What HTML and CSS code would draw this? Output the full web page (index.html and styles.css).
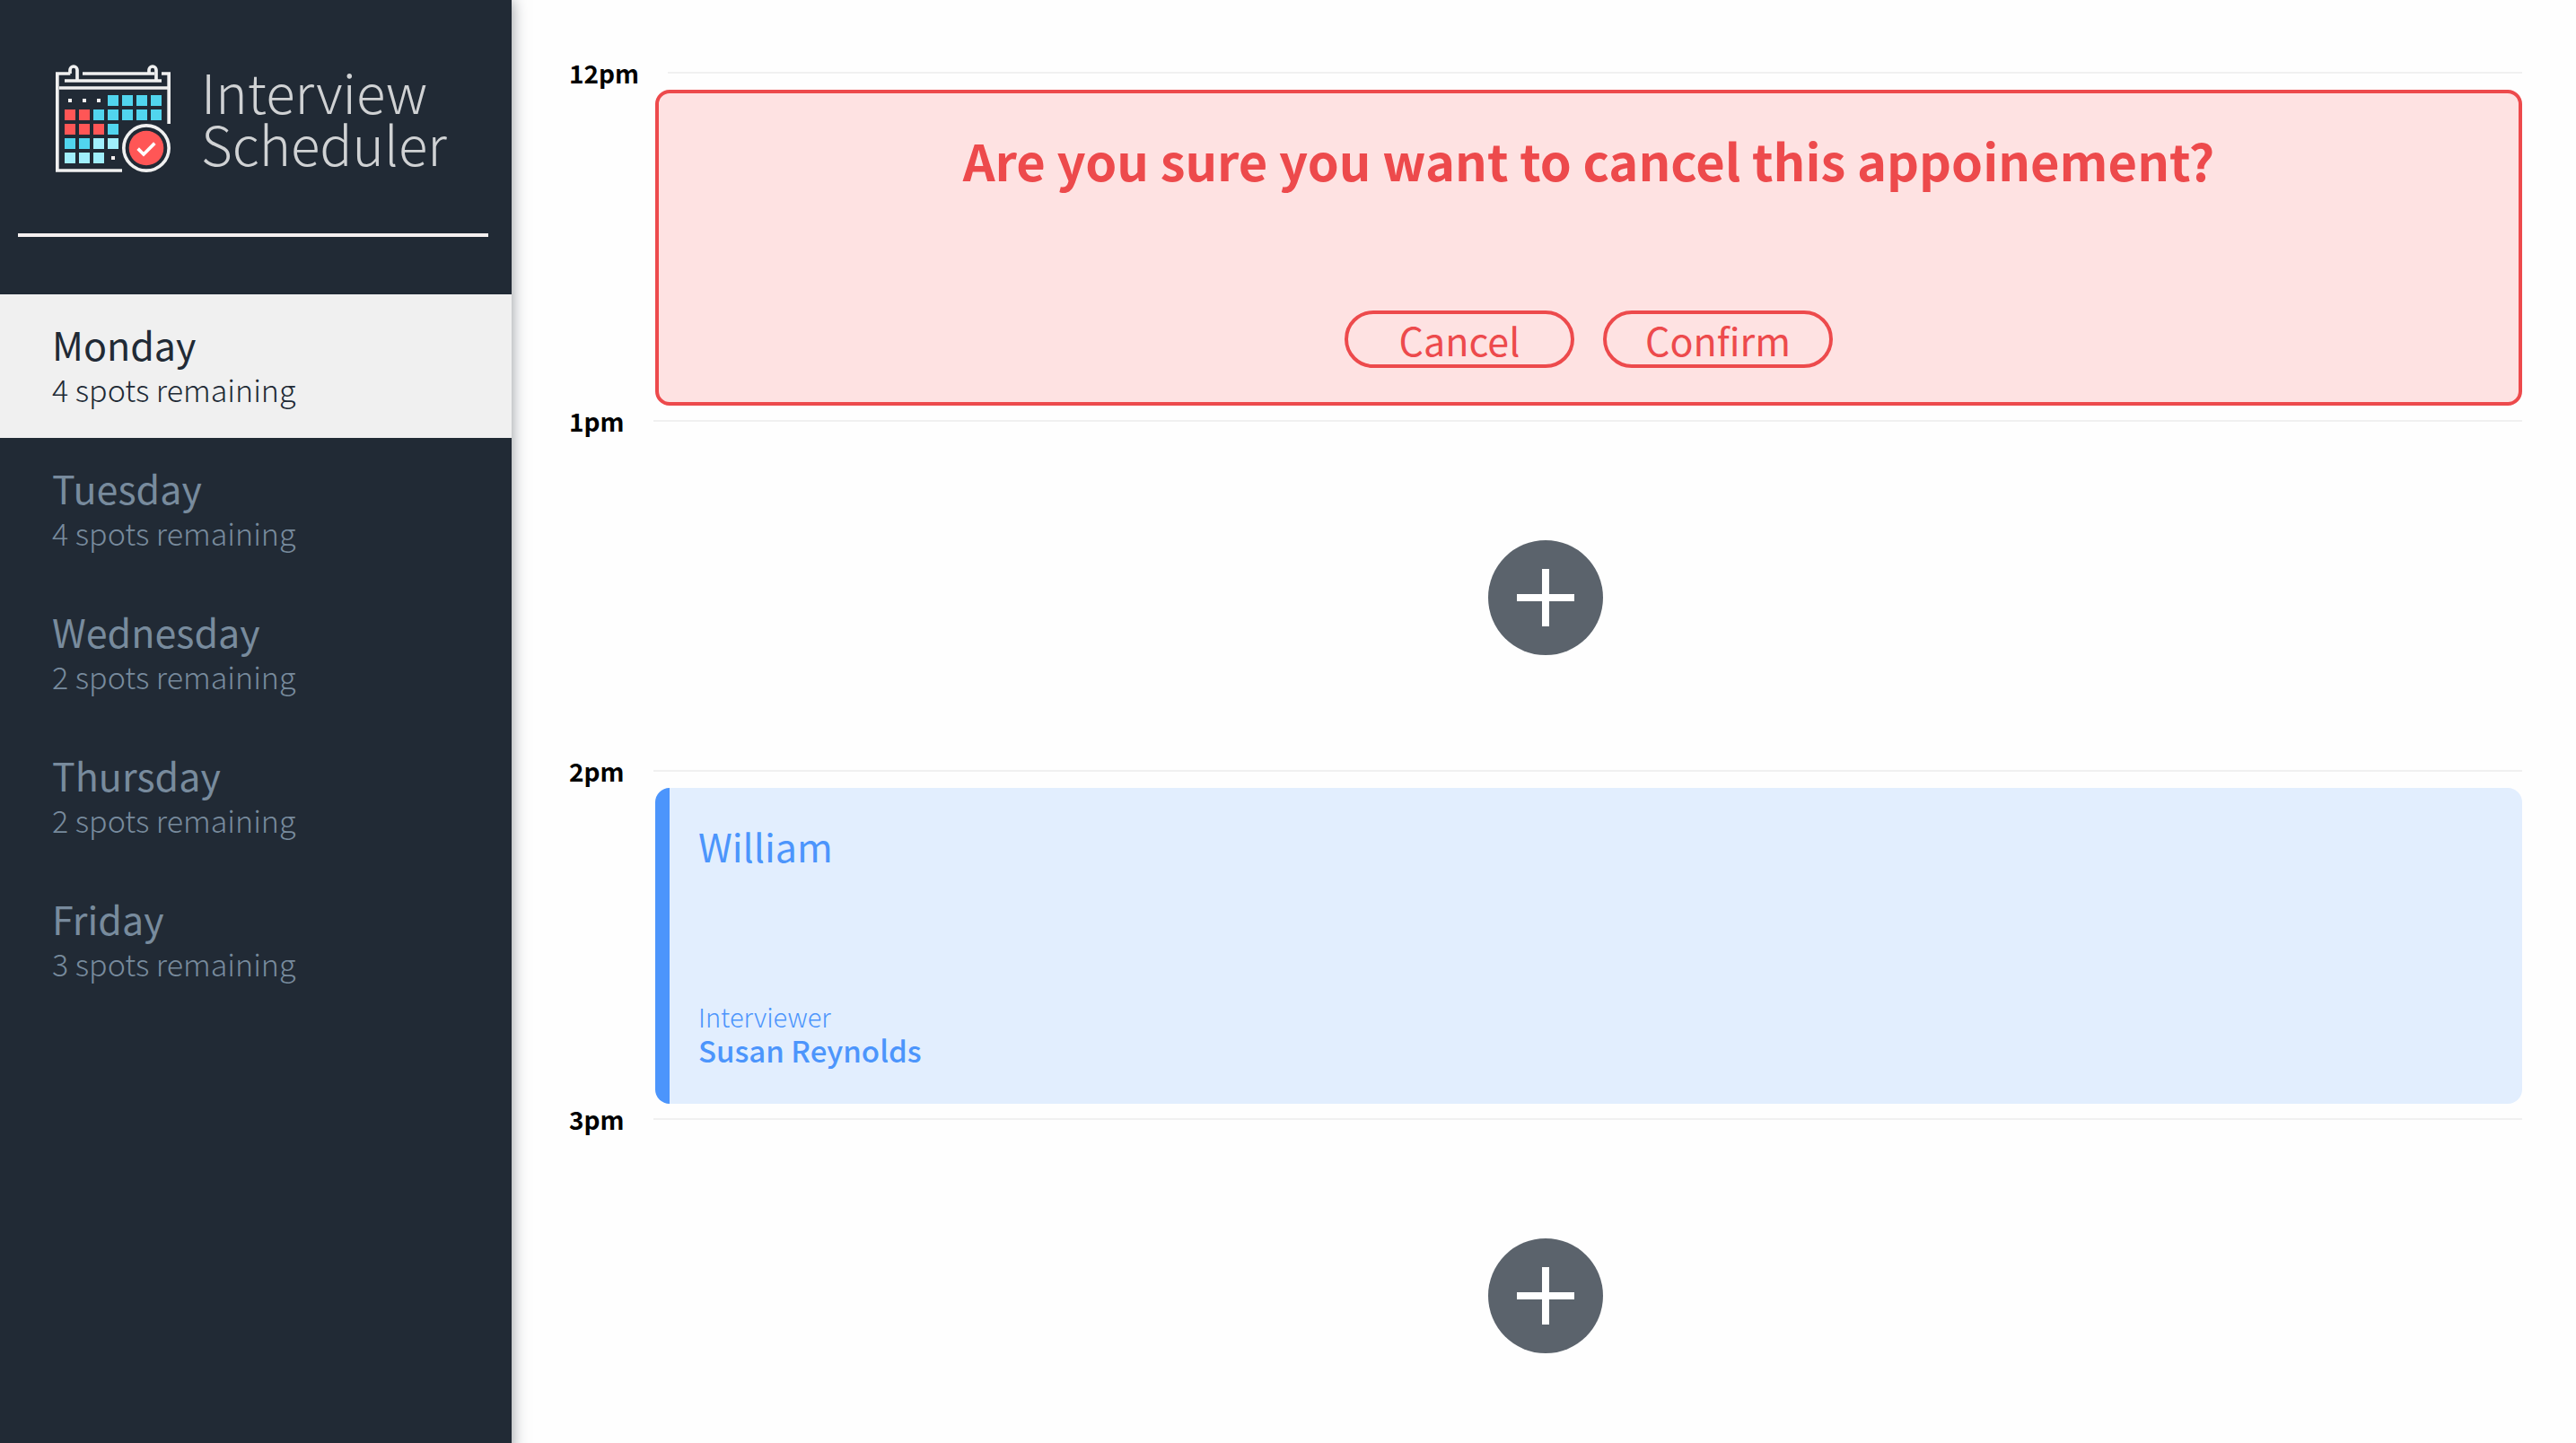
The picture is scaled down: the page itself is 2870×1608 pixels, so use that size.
FILE: index.html
```html
<!DOCTYPE html>
<html lang="en">
<head>
<meta charset="utf-8">
<title>Interview Scheduler</title>
<link rel="stylesheet" href="styles.css">
</head>
<body>
<div class="layout">
  <aside class="sidebar">
    <div class="brand">
      <svg class="brand-icon" viewBox="66 66 384 360" aria-hidden="true">
        <g fill="none" stroke="#f0f0f0" stroke-width="11">
          <path d="M115 96H71.500V420H288M78 144H444M96 120H420M156 96H396M420 96H444.500V264"/>
          <path d="M114 96V84A12 12 0 0 1 138 84V117M378 96V84A12 12 0 0 1 402 84V117"/>
          <circle cx="369" cy="345" r="75.500"/>
        </g>
        <g fill="#f5f0f0">
          <path d="M108 180h12v12h-12zM156 180h12v12h-12zM204 180h12v12h-12zM252 372h12v12h-12z"/>
        </g>
        <path fill="#51d5ee" d="M240 168h36v36h-36zM288 168h36v36h-36zM336 168h36v36h-36zM384 168h36v36h-36zM192 216h36v36h-36zM240 216h36v36h-36zM288 216h36v36h-36zM336 216h36v36h-36zM384 216h36v36h-36zM240 264h36v36h-36zM96 312h36v36h-36zM144 312h36v36h-36z"/>
        <path fill="#ff5656" d="M96 216h36v36h-36zM144 216h36v36h-36zM96 264h36v36h-36zM144 264h36v36h-36zM192 264h36v36h-36z"/>
        <path fill="#a0effc" d="M192 312h36v36h-36zM240 312h36v36h-36zM96 360h36v36h-36zM144 360h36v36h-36zM192 360h36v36h-36z"/>
        <circle cx="369" cy="345" r="58" fill="#ff5656"/>
        <path d="M341 347L360 366L397 329" fill="none" stroke="#fff" stroke-width="11"/>
      </svg>
      <h1 class="brand-name">Interview<br>Scheduler</h1>
    </div>
    <hr class="divider">
    <nav class="days">
      <a class="day day-selected" href="#monday"><span class="day-name">Monday</span><span class="day-spots">4 spots remaining</span></a>
      <a class="day" href="#tuesday"><span class="day-name">Tuesday</span><span class="day-spots">4 spots remaining</span></a>
      <a class="day" href="#wednesday"><span class="day-name">Wednesday</span><span class="day-spots">2 spots remaining</span></a>
      <a class="day" href="#thursday"><span class="day-name">Thursday</span><span class="day-spots">2 spots remaining</span></a>
      <a class="day" href="#friday"><span class="day-name">Friday</span><span class="day-spots">3 spots remaining</span></a>
    </nav>
  </aside>
  <main class="schedule">
    <section class="slot">
      <header class="slot-header"><h4 class="slot-time">12pm</h4><hr class="slot-line"></header>
      <div class="card card-confirm">
        <h2 class="confirm-text">Are you sure you want to cancel this appoinement?</h2>
        <div class="confirm-actions">
          <button class="button" type="button">Cancel</button>
          <button class="button" type="button">Confirm</button>
        </div>
      </div>
    </section>
    <section class="slot">
      <header class="slot-header"><h4 class="slot-time">1pm</h4><hr class="slot-line"></header>
      <div class="empty">
        <button class="add" type="button" aria-label="Add appointment"><svg class="add-icon" viewBox="0 0 128 128"><path d="M64 32V96M32 64H96" stroke="#fff" stroke-width="8"/></svg></button>
      </div>
    </section>
    <section class="slot">
      <header class="slot-header"><h4 class="slot-time">2pm</h4><hr class="slot-line"></header>
      <div class="card card-booked">
        <h2 class="student">William</h2>
        <div class="interviewer">
          <h4 class="interviewer-label">Interviewer</h4>
          <h3 class="interviewer-name">Susan Reynolds</h3>
        </div>
      </div>
    </section>
    <section class="slot">
      <header class="slot-header"><h4 class="slot-time">3pm</h4><hr class="slot-line"></header>
      <div class="empty">
        <button class="add" type="button" aria-label="Add appointment"><svg class="add-icon" viewBox="0 0 128 128"><path d="M64 32V96M32 64H96" stroke="#fff" stroke-width="8"/></svg></button>
      </div>
    </section>
  </main>
</div>
</body>
</html>
```
FILE: styles.css
```css
* {
  box-sizing: border-box;
}

body {
  margin: 0;
  background: #fefefe;
  font-family: "Noto Sans CJK SC", "Noto Sans", sans-serif;
}

h1, h2, h3, h4 {
  margin: 0;
}

hr {
  margin: 0;
  border: 0;
}

button {
  margin: 0;
  padding: 0;
  font-family: inherit;
  cursor: pointer;
}

.layout {
  display: flex;
  min-height: 100vh;
}

/* Sidebar */

.sidebar {
  position: relative;
  z-index: 1;
  flex: 0 0 570px;
  background: #212a35;
  box-shadow: 0 0 16px rgba(33, 42, 53, 0.5);
}

.brand {
  display: flex;
  gap: 34px;
  padding: 72px 0 0 62px;
}

.brand-icon {
  width: 128px;
  height: 120px;
}

.brand-name {
  color: #d0d2d4;
  font-size: 60px;
  font-weight: 200;
  line-height: 58px;
}

.divider {
  height: 4px;
  margin: 68px 26px 64px 20px;
  background: #f5f0f0;
}

.day {
  display: flex;
  flex-direction: column;
  padding: 29px 58px;
  color: #788b9d;
  text-decoration: none;
}

.day-selected {
  background: #f0f0f0;
  color: #212a35;
}

.day-name {
  font-size: 43px;
  line-height: 52px;
}

.day-spots {
  font-size: 34px;
  font-weight: 300;
  line-height: 50px;
}

/* Schedule */

.schedule {
  flex: 1;
  padding: 64px 60px 0 64px;
}

.slot-header {
  display: flex;
  align-items: center;
  gap: 32px;
}

.slot-time {
  color: #000;
  font-size: 28px;
  font-weight: 700;
  line-height: 34px;
}

.slot-line {
  flex: 1;
  height: 2px;
  background: #f0f0f0;
}

.card {
  display: flex;
  flex-direction: column;
  justify-content: space-between;
  min-height: 352px;
  margin: 2px 0 0 96px;
  border-radius: 16px;
}

.card-confirm {
  align-items: center;
  padding: 38px 32px;
  border: 4px solid #ed4a4c;
  background: #fee2e2;
  color: #ed4a4c;
}

.confirm-text {
  font-size: 56px;
  font-weight: 700;
  line-height: 72px;
}

.confirm-actions {
  display: flex;
  gap: 32px;
}

.button {
  width: 256px;
  height: 64px;
  border: 4px solid #ed4a4c;
  border-radius: 32px;
  background: transparent;
  color: #ed4a4c;
  font-size: 43px;
  line-height: 54px;
}

.card-booked {
  padding: 38px 32px 40px;
  border-left: 16px solid #4c95fc;
  background: #e2eefe;
  color: #4c95fc;
}

.student {
  font-size: 43px;
  font-weight: 400;
  line-height: 52px;
}

.interviewer-label {
  font-size: 29px;
  font-weight: 300;
  line-height: 36px;
}

.interviewer-name {
  font-size: 33px;
  font-weight: 500;
  line-height: 40px;
}

.empty {
  display: flex;
  justify-content: center;
  margin-top: 2px;
  padding: 114px 0 112px;
}

.add {
  width: 128px;
  height: 128px;
  border: 0;
  border-radius: 50%;
  background: #5b636c;
}

.add-icon {
  display: block;
  width: 100%;
  height: 100%;
}
```
